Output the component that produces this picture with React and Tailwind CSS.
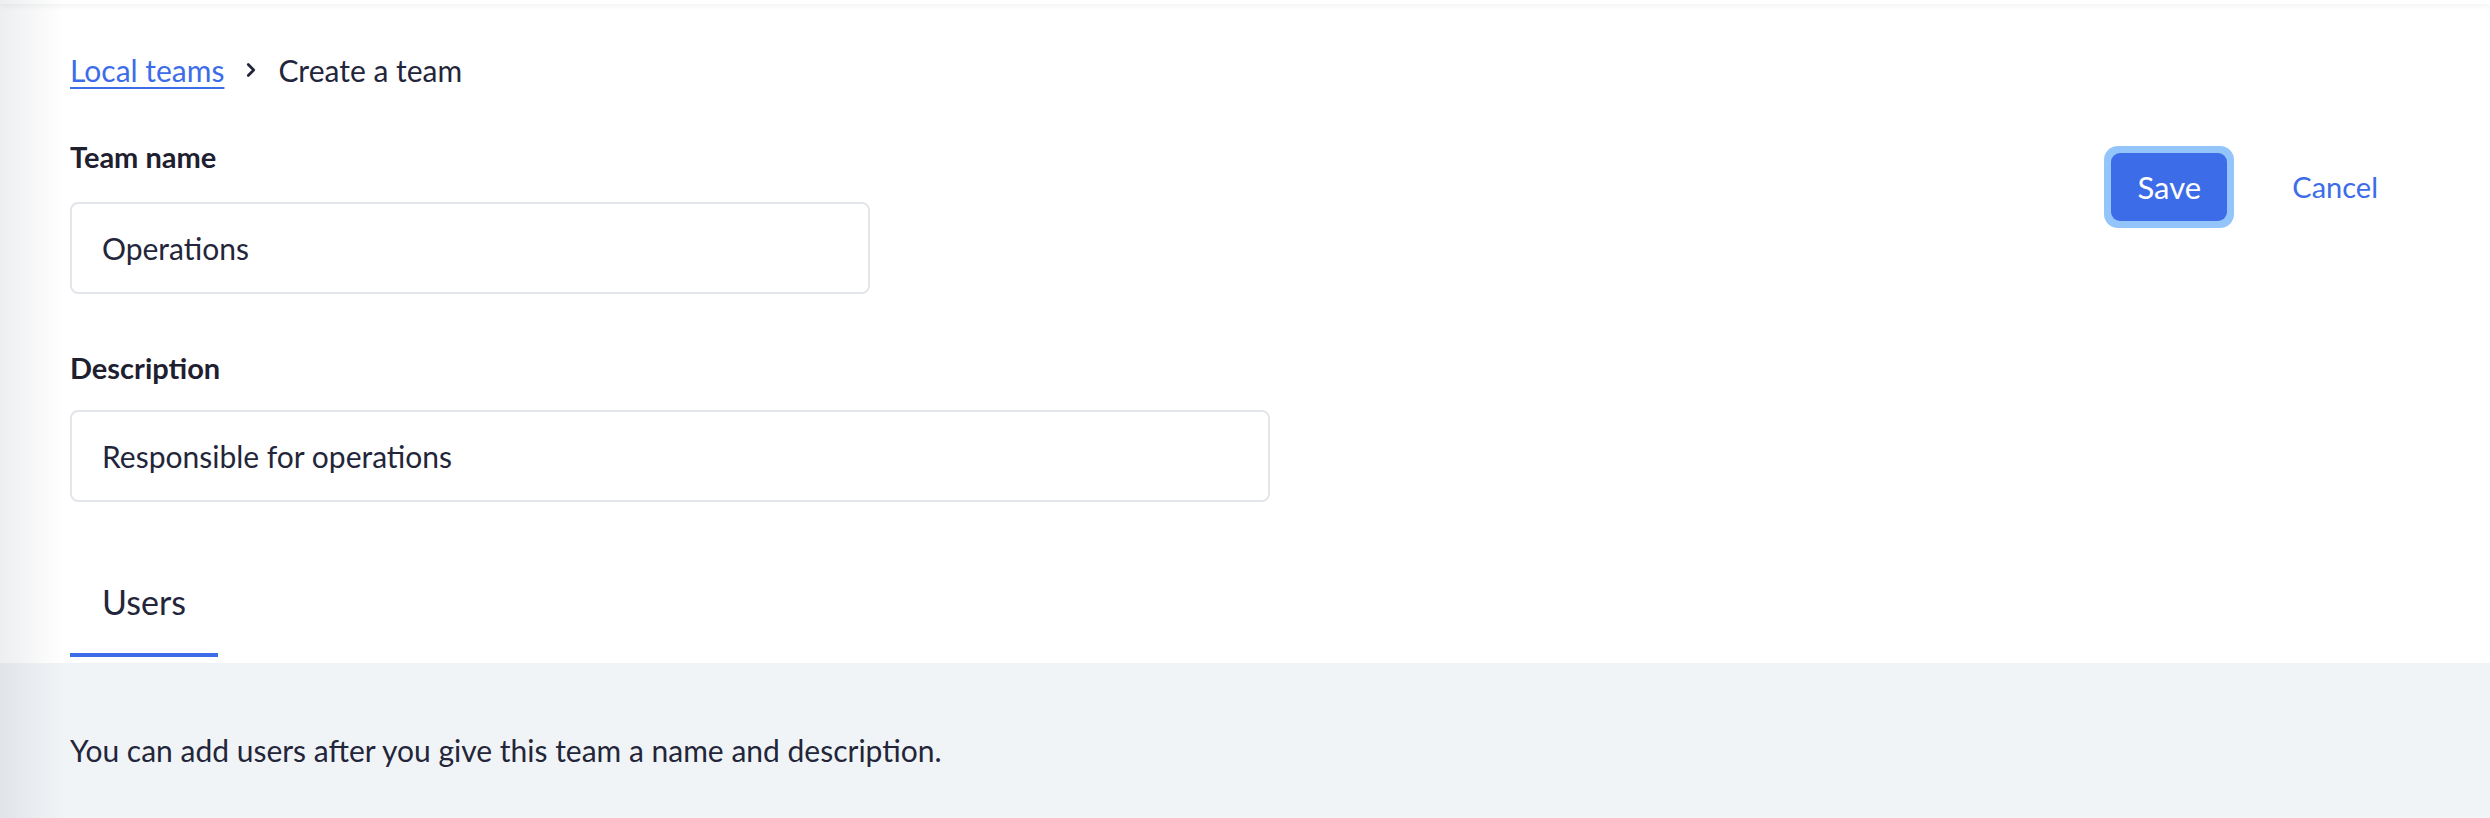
import { ChevronRight } from 'lucide-react';

export default function App() {
    return (
        <div className="relative flex min-h-screen w-full flex-col bg-white font-['Lato',sans-serif] text-[#23263a]">
            <div className="h-[4px] w-full bg-white shadow-[0_2px_5px_rgba(30,40,60,0.07)]" />
            <div className="pointer-events-none absolute inset-y-0 left-0 z-10 w-[64px] bg-gradient-to-r from-[rgba(20,30,50,0.075)] to-transparent" />

            <div className="px-[70px] pt-[46px]">
                <nav className="flex items-center text-[30px] leading-[40px]">
                    <a href="#" className="text-[#3d6ce9] underline decoration-[2px] underline-offset-[5px]">Local teams</a>
                    <ChevronRight className="mx-[16px] h-[22px] w-[22px] text-[#23263a]" strokeWidth={3} />
                    <span>Create a team</span>
                </nav>

                <div className="flex items-start justify-between">
                    <div className="w-[1200px]">
                        <label className="mt-[47px] block text-[29px] font-bold leading-[40px] text-[#1e2030]">Team name</label>
                        <div className="mt-[25px] flex h-[92px] w-[800px] items-center rounded-[8px] border-2 border-[#e2e5ea] px-[30px] text-[30px]">Operations</div>

                        <label className="mt-[54px] block text-[29px] font-bold leading-[40px] text-[#1e2030]">Description</label>
                        <div className="mt-[22px] flex h-[92px] w-[1200px] items-center rounded-[8px] border-2 border-[#e2e5ea] px-[30px] text-[30px]">Responsible for operations</div>
                    </div>

                    <div className="mr-[12px] mt-[56px] flex items-center">
                        <button className="h-[82px] rounded-[14px] bg-[#93c5fb] p-[7px]">
                            <span className="flex h-[68px] w-[116px] items-center justify-center rounded-[9px] bg-[#3d6ce9] text-[31px] text-white">Save</span>
                        </button>
                        <button className="ml-[28px] px-[30px] text-[29px] text-[#3d6ce9]">Cancel</button>
                    </div>
                </div>

                <div className="mt-[78px] flex">
                    <div className="flex w-[148px] flex-col items-center">
                        <span className="text-[34px] leading-[44px]">Users</span>
                        <span className="mt-[29px] h-[4px] w-full bg-[#3d6ce9]" />
                    </div>
                </div>
            </div>

            <div className="mt-[6px] flex-1 bg-[#f1f4f7] px-[70px] pt-[67px] text-[30px] leading-[40px]">
                You can add users after you give this team a name and description.
            </div>
        </div>
    );
}
